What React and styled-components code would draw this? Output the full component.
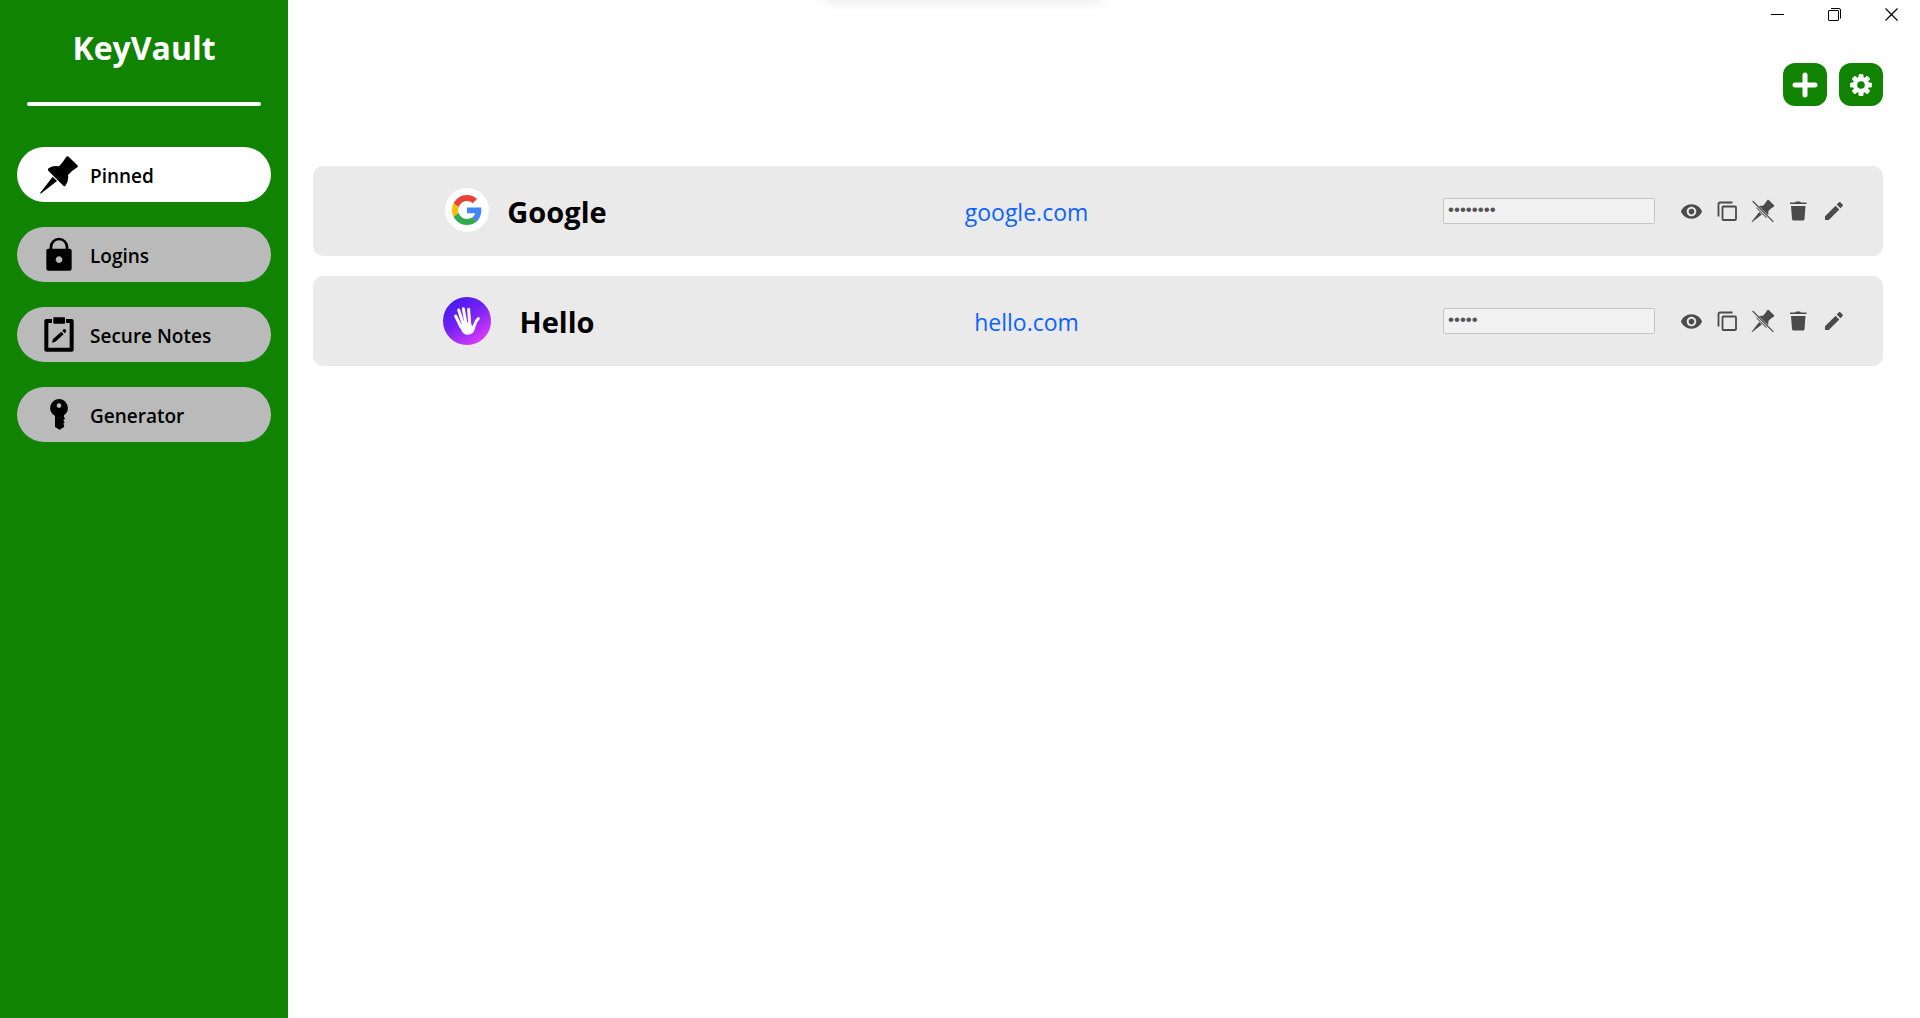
import React from "react";
import styled, { createGlobalStyle } from "styled-components";

const GREEN = "#108300";

const GlobalStyle = createGlobalStyle`
  *, *::before, *::after { box-sizing: border-box; }
  body {
    margin: 0;
    background: #fff;
    color: #000;
    font-family: "Segoe UI", "Open Sans", "Noto Sans", sans-serif;
  }
  button {
    padding: 0;
    border: 0;
    background: none;
    color: inherit;
    font: inherit;
    cursor: pointer;
  }
  svg { display: block; flex: none; }
`;

const Shell = styled.div`
  display: grid;
  grid-template-columns: 15% 1fr;
  min-height: 100vh;
`;

const Sidebar = styled.aside`
  padding: 24px 17px;
  background: ${GREEN};
`;

const Brand = styled.h1`
  margin: 0;
  color: #fff;
  font-size: 32px;
  line-height: 48px;
  font-weight: 700;
  text-align: center;
`;

const Divider = styled.hr`
  height: 4px;
  margin: 30px 10px 41px;
  border: 0;
  border-radius: 2px;
  background: #fff;
`;

const Nav = styled.nav`
  display: flex;
  flex-direction: column;
  gap: 25px;
`;

const NavButton = styled.button`
  display: flex;
  align-items: center;
  gap: 12px;
  width: 100%;
  height: 55px;
  padding: 0 23px;
  border-radius: 28px;
  background: ${(p) => (p.$active ? "#fff" : "#bababa")};
  font-size: 19px;
  line-height: 28px;
  font-weight: 600;
`;

const NavLabel = styled.span`
  padding-top: 2px;
`;

const Main = styled.main`
  display: flex;
  flex-direction: column;
  min-width: 0;
`;

const TitleBar = styled.header`
  display: flex;
  justify-content: flex-end;
`;

const WindowButton = styled.button`
  display: grid;
  place-items: center;
  width: 57px;
  height: 29px;
`;

const TopShadow = styled.div`
  position: absolute;
  top: -10px;
  left: 50%;
  width: 280px;
  height: 8px;
  margin-left: -137px;
  border-radius: 8px;
  box-shadow: 0 2px 14px rgba(0, 0, 0, 0.13);
`;

const Toolbar = styled.div`
  display: flex;
  justify-content: flex-end;
  gap: 12px;
  padding: 34px 37px 0 25px;
`;

const ToolButton = styled.button`
  display: grid;
  place-items: center;
  width: 44px;
  height: 43px;
  border-radius: 12px;
  background: ${GREEN};
`;

const List = styled.ul`
  display: flex;
  flex-direction: column;
  gap: 20px;
  margin: 0;
  padding: 60px 37px 0 25px;
  list-style: none;
`;

const Card = styled.li`
  display: grid;
  grid-template-columns: 440fr 547fr 583fr;
  align-items: center;
  height: 90px;
  border-radius: 10px;
  background: #eaeaea;
`;

const Identity = styled.div`
  display: flex;
  align-items: center;
  justify-content: center;
`;

const Name = styled.h2`
  width: 132px;
  margin: 0;
  padding-top: 2px;
  font-size: 29px;
  line-height: 40px;
  font-weight: 700;
  text-align: center;
`;

const Site = styled.a`
  justify-self: center;
  padding-top: 2px;
  color: #0d63ff;
  font-size: 23px;
  line-height: 32px;
  text-decoration: none;
`;

const Controls = styled.div`
  display: flex;
  align-items: center;
  justify-content: flex-end;
  gap: 24px;
  padding-right: 37px;
`;

const Password = styled.input`
  width: 212px;
  height: 26px;
  padding: 0 4px 2px;
  border: 1px solid #c6c6c6;
  border-radius: 2px;
  background: #f1f1f1;
  color: #545454;
  font-family: "Liberation Sans", Arial, sans-serif;
  font-size: 17px;
`;

const Actions = styled.div`
  display: flex;
  justify-content: space-between;
  width: 167px;
`;

const IconButton = styled.button`
  display: grid;
  place-items: center;
  width: 24px;
  height: 24px;
  color: #4b4b4b;
`;

const PIN_HEAD =
  "M79 2 Q82 -1 86 2 L112 28 Q115 31 112 34 L97 44 L84 57 Q87 76 76 89 Q73 92 70 89 L25 44 Q22 40 26 37 Q38 28 57 31 L66 21 Z";
const PIN_NEEDLE = "M38 62 L51 75 L4 112 Q0 115 1 110 Z";

const PinIcon = () => (
  <svg width="38" height="38" viewBox="0 0 114 114">
    <path d={PIN_HEAD} />
    <path d={PIN_NEEDLE} />
  </svg>
);

const LockIcon = () => (
  <svg width="38" height="38" viewBox="0 0 114 114">
    <path d="M33 42 V33 a24 24 0 0 1 48 0 V42" fill="none" stroke="#000" strokeWidth="8" />
    <path
      fillRule="evenodd"
      d="M25 38 H89 Q95 38 95 44 V98 Q95 104 89 104 H25 Q19 104 19 98 V44 Q19 38 25 38 Z M57 61 a10 10 0 1 0 0.1 0 Z"
    />
  </svg>
);

const NotesIcon = () => (
  <svg width="38" height="38" viewBox="0 0 114 114">
    <path
      d="M36 15 H19 V101 H95 V15 H78"
      fill="none"
      stroke="#000"
      strokeWidth="12"
      strokeLinejoin="round"
    />
    <rect x="40" y="4" width="35" height="19" rx="2" />
    <path d="M36 80 L39 69 L64 47 L71 55 L46 77 Z M67 44 L71 40 Q74 38 78 42 Q80 45 77 49 L74 52 Z" />
  </svg>
);

const KeyIcon = () => (
  <svg width="38" height="38" viewBox="0 0 114 114">
    <path
      fillRule="evenodd"
      d="M57 9 a27 27 0 0 1 15 49 V63 L75 68 L70 73 L74 79 L70 83 L73 90 L71 94 L59 101 L45 93 V60 A27 27 0 0 1 57 9 Z M57 22 a7 7 0 1 0 0.1 0 Z"
    />
  </svg>
);

const PlusIcon = () => (
  <svg width="26" height="26" viewBox="0 0 26 26">
    <path d="M13 3 V23 M3 13 H23" stroke="#fff" strokeWidth="5" strokeLinecap="round" />
  </svg>
);

const GearIcon = () => (
  <svg width="22" height="22" viewBox="-11 -11 22 22">
    {[0, 45, 90, 135].map((a) => (
      <rect key={a} x="-2.500" y="-11" width="5" height="22" rx="1.500" fill="#fff" transform={`rotate(${a})`} />
    ))}
    <circle r="8" fill="#fff" />
    <circle r="3.800" fill={GREEN} />
  </svg>
);

const MinimizeIcon = () => (
  <svg width="13" height="13" viewBox="0 0 13 13" shapeRendering="crispEdges">
    <rect y="6" width="13" height="1" />
  </svg>
);

const RestoreIcon = () => (
  <svg width="13" height="13" viewBox="0 0 13 13" fill="none" stroke="#000">
    <rect x="0.500" y="2.500" width="10" height="10" rx="0.500" />
    <path d="M3 0.500 H11 Q12.500 0.500 12.500 2 V10.500" />
  </svg>
);

const CloseIcon = () => (
  <svg width="13" height="13" viewBox="0 0 13 13" stroke="#000" strokeWidth="1.200">
    <path d="M0.500 0.500 L12.500 12.500 M12.500 0.500 L0.500 12.500" />
  </svg>
);

const GoogleLogo = () => (
  <svg width="48" height="48" viewBox="0 0 48 48">
    <circle cx="24" cy="23" r="22" fill="#fff" />
    <g transform="translate(9 8) scale(0.625)">
      <path fill="#EA4335" d="M24 9.5c3.54 0 6.71 1.22 9.21 3.6l6.85-6.85C35.9 2.38 30.47 0 24 0 14.62 0 6.51 5.38 2.56 13.22l7.98 6.19C12.43 13.72 17.74 9.5 24 9.5z" />
      <path fill="#4285F4" d="M46.98 24.55c0-1.57-.15-3.09-.38-4.55H24v9.02h12.94c-.58 2.96-2.26 5.48-4.78 7.18l7.73 6c4.51-4.18 7.09-10.36 7.09-17.65z" />
      <path fill="#FBBC05" d="M10.53 28.59c-.48-1.45-.76-2.99-.76-4.59s.27-3.14.76-4.59l-7.98-6.19C.92 16.46 0 20.12 0 24c0 3.88.92 7.54 2.56 10.78l7.97-6.19z" />
      <path fill="#34A853" d="M24 48c6.48 0 11.93-2.13 15.89-5.81l-7.73-6c-2.15 1.45-4.92 2.3-8.16 2.3-6.26 0-11.57-4.22-13.47-9.91l-7.98 6.19C6.51 42.62 14.62 48 24 48z" />
    </g>
  </svg>
);

const HelloLogo = () => (
  <svg width="48" height="48" viewBox="0 0 144 144">
    <defs>
      <linearGradient id="hello-fill" x1="0.2" y1="0.1" x2="0.8" y2="0.95">
        <stop offset="0" stopColor="#4a1af0" />
        <stop offset="0.4" stopColor="#7321f5" />
        <stop offset="1" stopColor="#dc3cfa" />
      </linearGradient>
    </defs>
    <circle cx="72" cy="72" r="72" fill="url(#hello-fill)" />
    <g stroke="#fff" strokeWidth="9" strokeLinecap="round" fill="none">
      <path d="M38 57 L54 90" />
      <path d="M47 39 L61 82" />
      <path d="M61 35 L69 80" />
      <path d="M77 37 L80 80" />
      <path d="M106 65 Q98 71 95 84 L89 96" />
    </g>
    <path d="M52 84 L64 76 L83 77 L88 88 L97 84 Q97 112 75 113 Q60 113 54 98 Z" fill="#fff" />
  </svg>
);

const EyeIcon = () => (
  <svg width="23" height="23" viewBox="0 0 24 24" fill="currentColor">
    <path d="M12 4.500C7 4.500 2.730 7.610 1 12c1.730 4.390 6 7.500 11 7.500s9.270-3.110 11-7.500c-1.730-4.390-6-7.500-11-7.500zM12 17c-2.760 0-5-2.240-5-5s2.240-5 5-5 5 2.240 5 5-2.240 5-5 5zm0-8c-1.660 0-3 1.340-3 3s1.340 3 3 3 3-1.340 3-3-1.340-3-3-3z" />
  </svg>
);

const CopyIcon = () => (
  <svg width="20" height="20" viewBox="0 0 20 20" fill="none" stroke="currentColor" strokeWidth="1.800">
    <path d="M1.500 15.500 V3 Q1.500 1.500 3 1.500 H15.500" />
    <rect x="5.500" y="5.500" width="13.500" height="13.500" rx="1" />
  </svg>
);

const UnpinIcon = () => (
  <svg width="24" height="24" viewBox="0 0 120 120" fill="currentColor">
    <g transform="translate(3 3)">
      <path d={PIN_HEAD} />
      <path d={PIN_NEEDLE} />
    </g>
    <path d="M10 14 L108 112" stroke="#eaeaea" strokeWidth="13" />
    <path d="M8 10 L112 114" stroke="currentColor" strokeWidth="6" />
  </svg>
);

const TrashIcon = () => (
  <svg width="20" height="20" viewBox="0 0 20 20" fill="currentColor">
    <path d="M2 1.500 H7 L8 0.500 H12 L13 1.500 H18.500 V3 H2 Z" />
    <path d="M3 5 H17.500 L16.500 18 Q16.400 19.500 15 19.500 H5.500 Q4.200 19.500 4 18 Z" />
  </svg>
);

const EditIcon = () => (
  <svg width="24" height="24" viewBox="0 0 24 24" fill="currentColor">
    <path d="M3 17.250V21h3.750L17.300 10.400l-3.750-3.750L3 17.250zM20.710 7.040c.39-.39.39-1.020 0-1.410l-2.340-2.340c-.39-.39-1.020-.39-1.410 0l-2.300 2.300 3.750 3.750 2.300-2.300z" />
  </svg>
);

const NAV = [
  { label: "Pinned", Icon: PinIcon },
  { label: "Logins", Icon: LockIcon },
  { label: "Secure Notes", Icon: NotesIcon },
  { label: "Generator", Icon: KeyIcon },
];

const LOGINS = [
  { name: "Google", site: "google.com", secret: "password", Logo: GoogleLogo },
  { name: "Hello", site: "hello.com", secret: "hello", Logo: HelloLogo },
];

const ACTIONS = [
  { label: "Show password", Icon: EyeIcon },
  { label: "Copy password", Icon: CopyIcon },
  { label: "Unpin", Icon: UnpinIcon },
  { label: "Delete", Icon: TrashIcon },
  { label: "Edit", Icon: EditIcon },
];

export default function App() {
  return (
    <>
      <GlobalStyle />
      <Shell>
        <Sidebar>
          <Brand>KeyVault</Brand>
          <Divider />
          <Nav>
            {NAV.map(({ label, Icon }, i) => (
              <NavButton key={label} $active={i === 0}>
                <Icon />
                <NavLabel>{label}</NavLabel>
              </NavButton>
            ))}
          </Nav>
        </Sidebar>
        <Main>
          <TitleBar>
            <WindowButton aria-label="Minimize"><MinimizeIcon /></WindowButton>
            <WindowButton aria-label="Restore"><RestoreIcon /></WindowButton>
            <WindowButton aria-label="Close"><CloseIcon /></WindowButton>
          </TitleBar>
          <Toolbar>
            <ToolButton aria-label="Add login"><PlusIcon /></ToolButton>
            <ToolButton aria-label="Settings"><GearIcon /></ToolButton>
          </Toolbar>
          <List>
            {LOGINS.map(({ name, site, secret, Logo }) => (
              <Card key={name}>
                <Identity>
                  <Logo />
                  <Name>{name}</Name>
                </Identity>
                <Site href={`#${site}`}>{site}</Site>
                <Controls>
                  <Password type="password" disabled defaultValue={secret} aria-label={`${name} password`} />
                  <Actions>
                    {ACTIONS.map(({ label, Icon }) => (
                      <IconButton key={label} aria-label={label}><Icon /></IconButton>
                    ))}
                  </Actions>
                </Controls>
              </Card>
            ))}
          </List>
        </Main>
      </Shell>
      <TopShadow />
    </>
  );
}
